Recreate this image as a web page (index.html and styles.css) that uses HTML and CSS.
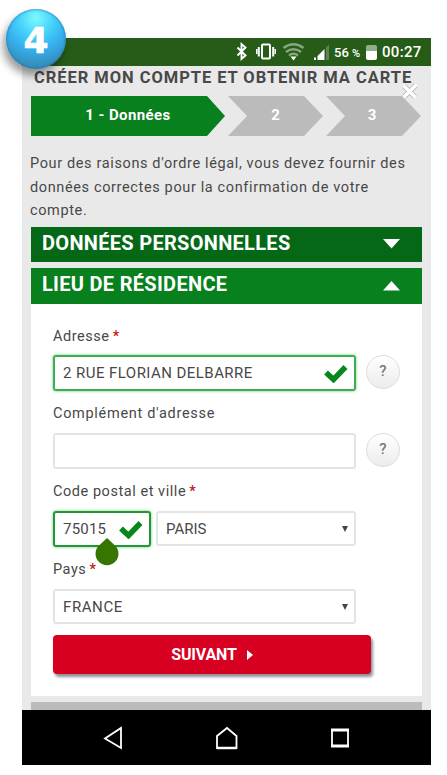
FILE: index.html
```html
<!DOCTYPE html>
<html lang="fr">
<head>
    <meta charset="UTF-8">
    <meta name="viewport" content="width=device-width, initial-scale=1.0">
    <title>Créer mon compte</title>
    <link rel="stylesheet" href="styles.css">
</head>
<body>
    <div class="badge">4</div>

    <div class="phone">
        <div class="status-bar">
            <svg class="status-icons" width="112" height="28" viewBox="0 0 112 28">
                <!-- bluetooth -->
                <path d="M1.500 9.500l8 8-4 3.500V6l4 3.500-8 8" fill="none" stroke="#fff" stroke-width="1.900"/>
                <!-- vibrate -->
                <rect x="26" y="6.500" width="8" height="14" rx="1" fill="none" stroke="#fff" stroke-width="2"/>
                <path d="M22.800 9v9.500M37.200 9v9.500" stroke="#fff" stroke-width="2"/>
                <path d="M20.800 11v5M39.200 11v5" stroke="#fff" stroke-width="1.500"/>
                <!-- wifi -->
                <g fill="none" stroke="#86a77c" stroke-width="2.600">
                    <path d="M47.500 10q10-7.500 20 0"/>
                    <path d="M50 14q7.500-5.500 15 0"/>
                    <path d="M53 17.500q4.500-3.500 9 0"/>
                </g>
                <path d="M54.500 18.500h6l-3 4z" fill="#fff"/>
                <!-- signal -->
                <path d="M93 6.500V22h-3V9.500z" fill="#5c8350"/>
                <path d="M88.500 11v11H81.500v-4z" fill="#fff"/>
                <path d="M78 19.500h2V22h-2z" fill="#fff"/>
            </svg>
            <span class="battery-level">56 <small>%</small></span>
            <span class="battery"></span>
            <span class="clock">00:27</span>
        </div>

        <div class="screen">
            <div class="heading">
                <h1>CRÉER MON COMPTE ET OBTENIR MA CARTE</h1>
                <svg class="close" width="18" height="18" viewBox="0 0 18 18">
                    <path d="M3 4l11 11M15 3L3 15" stroke="#b5b5b5" stroke-width="5"/>
                    <path d="M2.500 3.500l12 12M15.500 2.500L2.500 15.500" stroke="#fff" stroke-width="3.400"/>
                </svg>
            </div>

            <div class="steps">
                <div class="step step-active">1 - Données</div>
                <div class="step">2</div>
                <div class="step">3</div>
            </div>

            <p class="intro">
                <span class="line">Pour des raisons d'ordre légal, vous devez fournir des</span>
                <span class="line">données correctes pour la confirmation de votre</span>
                <span class="line">compte.</span>
            </p>

            <div class="section-title section-closed">
                <span>DONNÉES PERSONNELLES</span>
                <svg width="17" height="10" viewBox="0 0 17 10"><path d="M0 0h17L8.500 9.500z" fill="#fff"/></svg>
            </div>
            <div class="section-title">
                <span>LIEU DE RÉSIDENCE</span>
                <svg width="17" height="10" viewBox="0 0 17 10"><path d="M0 9.500h17L8.500 0z" fill="#fff"/></svg>
            </div>

            <div class="panel">
                <div class="label">Adresse <b>*</b></div>
                <div class="row row-address">
                    <div class="field valid address">
                        <span>2 RUE FLORIAN DELBARRE</span>
                        <svg width="25" height="19" viewBox="0 0 25 19"><path d="M3 8.500l7.500 7L22.500 3" fill="none" stroke="#07871b" stroke-width="5.500"/></svg>
                    </div>
                    <div class="help">?</div>
                </div>

                <div class="label label-wide">Complément d'adresse</div>
                <div class="row row-extra">
                    <div class="field"></div>
                    <div class="help">?</div>
                </div>

                <div class="label">Code postal et ville <b>*</b></div>
                <div class="row row-city">
                    <div class="field valid zip">
                        <span>75015</span>
                        <svg width="25" height="19" viewBox="0 0 25 19"><path d="M3 8.500l7.500 7L22.500 3" fill="none" stroke="#07871b" stroke-width="5.500"/></svg>
                        <svg class="handle" width="24" height="28" viewBox="0 0 24 28"><path d="M12 0l8 7.500a11.500 11.500 0 1 1-16 0z" fill="#367500"/></svg>
                    </div>
                    <div class="field select city"><span>PARIS</span><i class="arrow"></i></div>
                </div>

                <div class="label">Pays <b>*</b></div>
                <div class="row row-country">
                    <div class="field select country"><span>FRANCE</span><i class="arrow"></i></div>
                </div>

                <div class="submit">
                    <span>SUIVANT</span>
                    <svg width="6" height="10" viewBox="0 0 6 10"><path d="M0 0l6 5-6 5z" fill="#fff"/></svg>
                </div>
            </div>

            <div class="next-section"></div>
        </div>

        <div class="nav-bar">
            <svg width="20" height="24" viewBox="0 0 20 24"><path d="M18 2v20L2 12.500z" fill="none" stroke="#fff" stroke-width="1.800"/></svg>
            <svg width="24" height="24" viewBox="0 0 24 24"><path d="M2 22V10L12 2l9.500 8v12z" fill="none" stroke="#fff" stroke-width="1.800"/><path d="M2 22h19.500" stroke="#fff" stroke-width="2.500"/></svg>
            <svg width="18" height="20" viewBox="0 0 18 20"><path d="M0 2h18M0 18h18" stroke="#fff" stroke-width="3"/><path d="M1 1v18M17 1v18" stroke="#fff" stroke-width="1.800"/></svg>
        </div>
    </div>
</body>
</html>
```

FILE: styles.css
```css
* {
    box-sizing: border-box;
}
body {
    margin: 0;
    height: 775px;
    padding: 38px 16px 11px 22px;
    overflow: hidden;
    background: #fff;
    color: #484848;
    font-family: Roboto, "Liberation Sans", sans-serif;
    font-size: 14px;
}
svg {
    display: block;
    flex: none;
}
span {
    white-space: nowrap;
}

/* numbered ball over the corner of the phone */
.badge {
    position: absolute;
    z-index: 2;
    left: 6px;
    top: 9px;
    width: 60px;
    height: 60px;
    border-radius: 50%;
    background: radial-gradient(circle at 50% 15%, #7dfaff 0, #48d3fc 28%, #35b1ee 52%, #358fbe 80%, #2a719a 100%);
    box-shadow: -3px 6px 8px rgba(0, 0, 0, 0.4), inset 0 0 3px #1c6f9f;
    color: #fff;
    font: bold 36px/63px "DejaVu Sans", sans-serif;
    -webkit-text-stroke: 0.7px #fff;
    text-align: center;
}

.phone {
    width: 409px;
    height: 726px;
    display: flex;
    flex-direction: column;
    background: #e9e9e9;
}
.status-bar {
    height: 28px;
    flex: none;
    display: flex;
    align-items: center;
    padding-left: 214px;
    background: #265c17;
    color: #fff;
}
.status-icons {
    margin-right: -14px;
}
.battery-level {
    width: 31px;
    font-size: 13px;
    font-weight: 500;
}
.battery-level small {
    font-size: 11px;
}
.battery {
    width: 11px;
    height: 15px;
    margin-left: 1px;
    border-radius: 2px;
    background: linear-gradient(#92ad89 40%, #fff 40%);
}
.clock {
    margin-left: 5px;
    font-size: 15px;
    font-weight: 500;
    letter-spacing: 0.3px;
}

.screen {
    flex: 1;
    padding: 0 9px;
    display: flex;
    flex-direction: column;
}
.heading {
    position: relative;
    height: 30px;
    padding-left: 3px;
}
h1 {
    margin: 0;
    font-size: 16.5px;
    font-weight: 700;
    line-height: 23px;
    letter-spacing: 0.95px;
    white-space: nowrap;
}
.close {
    position: absolute;
    right: 3px;
    top: 16px;
}

.steps {
    display: flex;
    gap: 3px;
}
.step {
    width: 95px;
    height: 40px;
    background: #bbb;
    color: #fff;
    font-weight: 700;
    font-size: 15px;
    line-height: 38px;
    text-align: center;
    clip-path: polygon(0 0, 76px 0, 100% 50%, 76px 100%, 0 100%, 19px 50%);
}
.step:last-child {
    padding-right: 3px;
}
.step-active {
    width: 194px;
    background: #07801d;
    letter-spacing: 0.4px;
    clip-path: polygon(0 0, 176px 0, 100% 50%, 176px 100%, 0 100%);
}

.intro {
    height: 91px;
    margin: 0 0 0 -1px;
    padding-top: 16px;
}
.line {
    display: block;
    font-size: 14.5px;
    line-height: 23.7px;
    letter-spacing: 0.63px;
}

.section-title {
    height: 36px;
    flex: none;
    display: flex;
    justify-content: space-between;
    align-items: center;
    padding: 0 22px 4px 11px;
    background: #07801d;
    color: #fff;
    font-size: 20px;
    font-weight: 700;
    letter-spacing: 0.3px;
}
.section-title svg {
    margin-top: 3px;
}
.section-closed {
    height: 35px;
    margin-bottom: 6px;
    background: #056817;
}

.panel {
    height: 392px;
    flex: none;
    padding: 22px 22px 0 22px;
    background: #fff;
}
.label {
    height: 22px;
    font-size: 14.5px;
    line-height: 22px;
    letter-spacing: 0.55px;
}
.label-wide {
    letter-spacing: 0.7px;
}
.label b {
    margin-left: -1px;
    color: #c01515;
    font-weight: 500;
}
.row {
    display: flex;
    gap: 5px;
}
.field {
    position: relative;
    width: 303px;
    height: 36px;
    display: flex;
    align-items: center;
    justify-content: space-between;
    padding: 0 6px 0 8px;
    border: 2px solid #e4e4e4;
    border-radius: 3px;
    font-size: 15px;
}
.valid {
    border-color: #3fae52;
    box-shadow: 0 0 3px #65c477;
}
.address {
    letter-spacing: 0.45px;
}
.help {
    width: 34px;
    height: 34px;
    margin: 0 0 0 5px;
    border: 1px solid #ddd;
    border-radius: 50%;
    background: linear-gradient(#fff, #ececec);
    color: #777;
    font-size: 15px;
    font-weight: 500;
    line-height: 31px;
    text-align: center;
}
.row-address {
    margin: 7px 0 12px;
}
.row-extra {
    margin: 8px 0 12px;
}
.row-city {
    margin: 8px 0 12px;
}
.row-country {
    margin: 8px 0 11px;
}
.zip {
    width: 98px;
    border-color: #239636;
    letter-spacing: 0.2px;
}
.city {
    width: 200px;
}
.select {
    height: 35px;
}
.country {
    letter-spacing: 0.6px;
}
.arrow {
    border: 3px solid transparent;
    border-top: 6px solid #444;
    border-bottom: 0;
}
.handle {
    position: absolute;
    z-index: 1;
    left: 40px;
    top: 25px;
}
.submit {
    width: 318px;
    height: 39px;
    display: flex;
    align-items: center;
    justify-content: center;
    gap: 10px;
    border-radius: 4px;
    background: #d70020;
    box-shadow: 2px 3px 3px #8b9496;
    color: #fff;
    font-size: 16px;
    font-weight: 700;
}
.submit span {
    letter-spacing: -0.2px;
}
.next-section {
    height: 8px;
    margin-top: 6px;
    background: #bbb;
}

.nav-bar {
    height: 55px;
    flex: none;
    display: flex;
    align-items: center;
    gap: 92px;
    padding: 1px 0 0 81px;
    background: #000;
}
```
